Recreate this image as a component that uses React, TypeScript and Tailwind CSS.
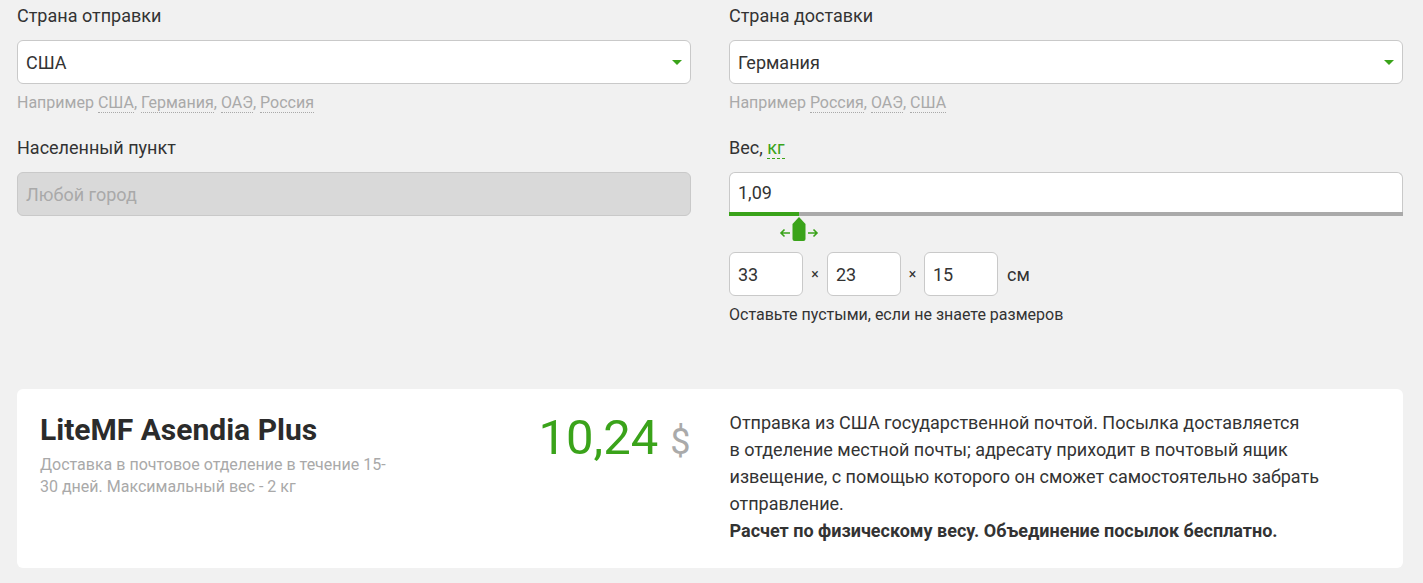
import React from 'react'

const font = { fontFamily: 'Roboto, "Open Sans", sans-serif' }

function Hint({ prefix, items }: { prefix: string; items: string[] }) {
  return (
    <div className="mt-[9px] h-5 text-[16px] leading-5 text-[#a9a9a9]">
      {prefix}{' '}
      {items.map((it, i) => (
        <span key={it}>
          <span className="border-b border-dotted border-[#a9a9a9]">{it}</span>
          {i < items.length - 1 ? ', ' : ''}
        </span>
      ))}
    </div>
  )
}

function SelectBox({ value }: { value: string }) {
  return (
    <div className="flex h-[44px] items-center justify-between rounded-md border border-[#c9c9c9] bg-white pl-[8px] pr-[8px] text-[18px] text-[#333]">
      <span>{value}</span>
      <span className="h-0 w-0 border-x-[5px] border-t-[5px] border-x-transparent border-t-[#3aa31a]" />
    </div>
  )
}

function Label({ children }: { children: React.ReactNode }) {
  return <div className="mb-3 h-6 text-[18px] leading-6 text-[#333]">{children}</div>
}

function SmallBox({ value }: { value: string }) {
  return (
    <div className="flex h-[44px] w-[74px] items-center rounded-md border border-[#c9c9c9] bg-white pl-[8px] text-[18px] text-[#333]">
      {value}
    </div>
  )
}

export default function App() {
  return (
    <div className="min-h-[583px] bg-[#f1f1f1] pl-[17px] pr-[20px] pt-1 pb-[15px]" style={font}>
      <div className="grid grid-cols-2 gap-x-[38px]">
        <div>
          <Label>Страна отправки</Label>
          <SelectBox value="США" />
          <Hint prefix="Например" items={['США', 'Германия', 'ОАЭ', 'Россия']} />
        </div>
        <div>
          <Label>Страна доставки</Label>
          <SelectBox value="Германия" />
          <Hint prefix="Например" items={['Россия', 'ОАЭ', 'США']} />
        </div>

        <div className="mt-[23px]">
          <Label>Населенный пункт</Label>
          <div className="flex h-[44px] items-center rounded-md border border-[#c9c9c9] bg-[#d9d9d9] pl-[8px] text-[18px] text-[#a9a9a9]">
            Любой город
          </div>
        </div>
        <div className="mt-[23px]">
          <Label>
            Вес,{' '}
            <span className="border-b border-dashed border-[#3aa31a] text-[#3aa31a]">кг</span>
          </Label>
          <div className="flex h-[40px] items-center rounded-t-md border border-b-0 border-[#c9c9c9] bg-white pl-[8px] text-[18px] text-[#333]">
            1,09
          </div>
          <div className="flex h-1">
            <div className="w-[70px] bg-[#3aa31a]" />
            <div className="flex-1 bg-[#aaaaaa]" />
          </div>
          <div className="ml-[50px] h-[36px]">
            <svg width="40" height="27" viewBox="0 0 40 27">
              <path d="M20 1 L26.5 8 L26.5 23 Q26.5 25 24.5 25 L15.5 25 Q13.5 25 13.5 23 L13.5 8 Z" fill="#3aa31a" />
              <path d="M11 17 H2 M5.5 13.5 L2 17 L5.5 20.5" stroke="#3aa31a" strokeWidth="1.6" fill="none" />
              <path d="M29 17 H38 M34.5 13.5 L38 17 L34.5 20.5" stroke="#3aa31a" strokeWidth="1.6" fill="none" />
            </svg>
          </div>
          <div className="flex items-center text-[18px] text-[#333]">
            <SmallBox value="33" />
            <span className="w-[24px] text-center text-[14px]">×</span>
            <SmallBox value="23" />
            <span className="w-[23px] text-center text-[14px]">×</span>
            <SmallBox value="15" />
            <span className="ml-[9px]">см</span>
          </div>
          <div className="mt-[9px] text-[16px] leading-5 text-[#333]">
            Оставьте пустыми, если не знаете размеров
          </div>
        </div>
      </div>

      <div className="mt-[64px] grid h-[179px] grid-cols-2 gap-x-[39px] rounded-md bg-white pl-[23px] pr-[23px] pt-[19px]">
        <div className="flex justify-between">
          <div>
            <div className="text-[30px] font-bold leading-[44px] text-[#2b2b2b]">LiteMF Asendia Plus</div>
            <div className="mt-[2px] text-[16px] leading-[22px] text-[#a9a9a9]">
              Доставка в почтовое отделение в течение 15-
              <br />
              30 дней. Максимальный вес - 2 кг
            </div>
          </div>
          <div className="flex items-baseline whitespace-nowrap pt-[4px]">
            <span className="text-[49px] leading-[52px] text-[#3aa31a]">10,24</span>
            <span className="ml-[12px] text-[36px] text-[#aaaaaa]">$</span>
          </div>
        </div>
        <div className="pt-[1px] text-[18px] leading-[27px] text-[#333]">
          Отправка из США государственной почтой. Посылка доставляется
          <br />
          в отделение местной почты; адресату приходит в почтовый ящик
          <br />
          извещение, с помощью которого он сможет самостоятельно забрать
          <br />
          отправление.
          <br />
          <span className="font-bold">Расчет по физическому весу. Объединение посылок бесплатно.</span>
        </div>
      </div>
    </div>
  )
}
